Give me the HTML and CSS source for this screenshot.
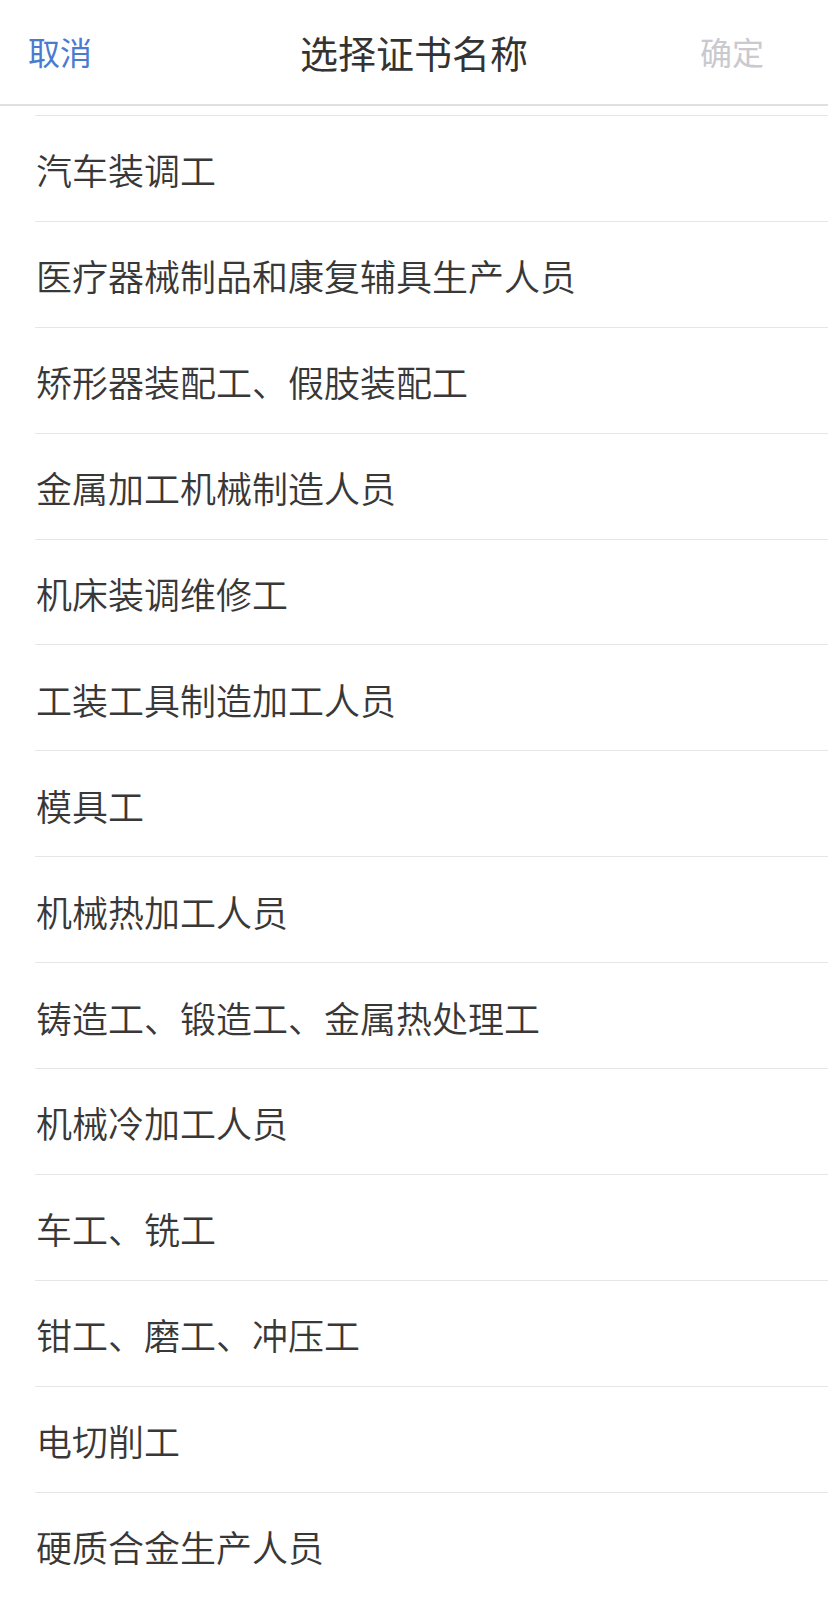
FILE: index.html
```html
<!DOCTYPE html>
<html lang="zh-CN">
<head>
<meta charset="utf-8">
<title>选择证书名称</title>
<link rel="stylesheet" href="styles.css">
</head>
<body>
<div class="page">
  <header class="nav">
    <span class="nav-btn cancel">取消</span>
    <span class="nav-title">选择证书名称</span>
    <span class="nav-btn confirm">确定</span>
  </header>
  <ul class="list">
    <li class="item">汽车装调工</li>
    <li class="item">医疗器械制品和康复辅具生产人员</li>
    <li class="item">矫形器装配工、假肢装配工</li>
    <li class="item">金属加工机械制造人员</li>
    <li class="item">机床装调维修工</li>
    <li class="item">工装工具制造加工人员</li>
    <li class="item">模具工</li>
    <li class="item">机械热加工人员</li>
    <li class="item">铸造工、锻造工、金属热处理工</li>
    <li class="item">机械冷加工人员</li>
    <li class="item">车工、铣工</li>
    <li class="item">钳工、磨工、冲压工</li>
    <li class="item">电切削工</li>
    <li class="item">硬质合金生产人员</li>
  </ul>
</div>
</body>
</html>
```

FILE: styles.css
```css
* { box-sizing: border-box; }
html, body {
  margin: 0;
  padding: 0;
  background: #ffffff;
}
body {
  font-family: "Noto Sans CJK SC", "Noto Sans", sans-serif;
  overflow: hidden;
  height: 1597px;
}
.page {
  width: 828px;
}
.nav {
  height: 106px;
  border-bottom: 2px solid #e0e0e0;
  display: flex;
  align-items: center;
  justify-content: space-between;
  padding: 0 64px 2px 28px;
  position: relative;
}
.nav-btn {
  font-size: 32px;
  line-height: 1;
}
.cancel { color: #4a7bcf; }
.confirm { color: #c9c9ce; }
.nav-title {
  font-size: 38px;
  color: #333333;
  line-height: 1;
  position: absolute;
  left: 0;
  right: 0;
  padding-top: 2px;
  text-align: center;
  pointer-events: none;
}
.list {
  list-style: none;
  margin: 0;
  padding: 9px 0 0 35px;
}
.item {
  height: 105.9px;
  border-top: 1px solid #e6e6e6;
  display: flex;
  align-items: center;
  padding: 2px 0 0 1px;
  font-size: 36px;
  font-weight: 350;
  color: #383838;
  line-height: 1;
}
```
